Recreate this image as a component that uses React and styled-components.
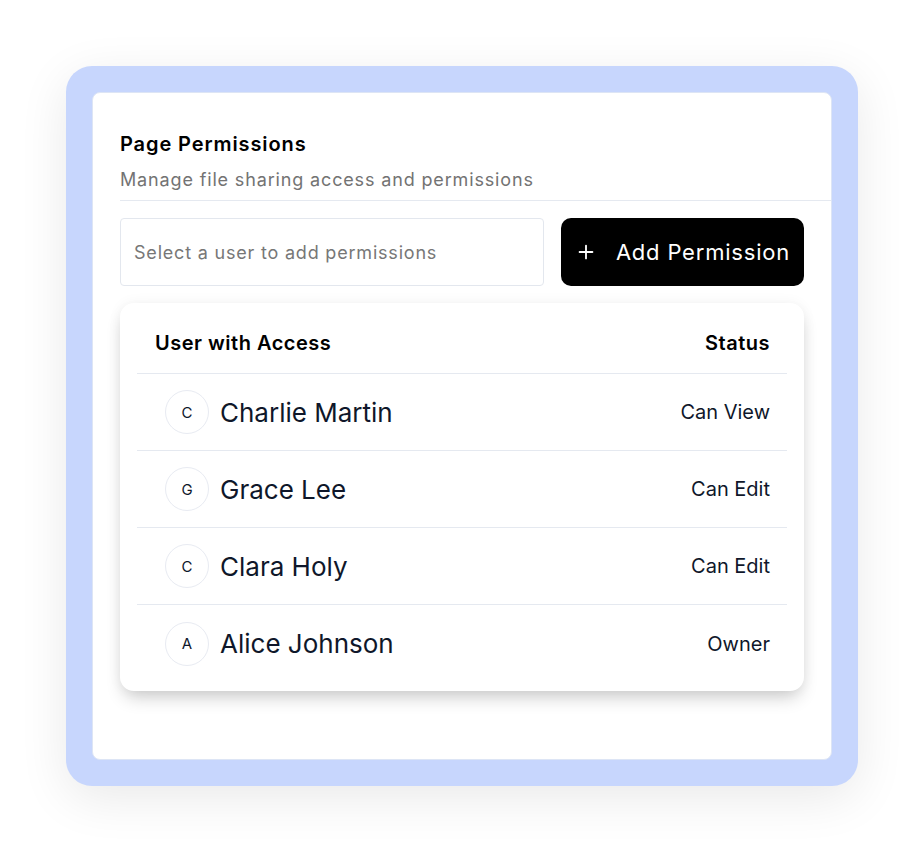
import React from "react"
import styled, { createGlobalStyle } from "styled-components"
import { Plus } from "lucide-react"

const GlobalStyle = createGlobalStyle`
    body {
        margin: 0;
        background: #ffffff;
        font-family: Inter, "Liberation Sans", sans-serif;
    }
`

const Page = styled.div`
    padding: 66px;
    width: 924px;
    height: 852px;
    box-sizing: border-box;
`
const Frame = styled.div`
    width: 792px;
    height: 720px;
    box-sizing: border-box;
    padding: 26px;
    background: #c7d6fd;
    border-radius: 26px;
    box-shadow: 0 12px 50px rgba(0, 0, 0, 0.09);
`
const Card = styled.div`
    height: 100%;
    box-sizing: border-box;
    background: #fff;
    border-radius: 8px;
    border: 1px solid #dde5f5;
    padding: 39px 27px 0 27px;
`
const Header = styled.div`
    margin-right: -27px;
    padding-bottom: 8px;
    border-bottom: 1px solid #e5e9f0;
`
const Title = styled.h2`
    margin: 0;
    font-size: 20px;
    line-height: 24px;
    font-weight: 600;
    color: #000;
    letter-spacing: 0.9px;
`
const Subtitle = styled.p`
    margin: 12px 0 0;
    font-size: 18px;
    line-height: 24px;
    color: #737373;
    letter-spacing: 0.85px;
`
const Controls = styled.div`
    display: grid;
    grid-template-columns: 424px 243px;
    gap: 17px;
    margin-top: 17px;
`
const Input = styled.input`
    height: 68px;
    box-sizing: border-box;
    border: 1px solid #e3e7ee;
    border-radius: 4px;
    padding: 0 13px;
    font-family: inherit;
    font-size: 18px;
    letter-spacing: 0.8px;
    color: #111;
    outline: none;
    &::placeholder {
        color: #777;
    }
`
const Button = styled.button`
    height: 68px;
    display: flex;
    align-items: center;
    justify-content: center;
    gap: 19px;
    background: #000;
    color: #fff;
    border: none;
    border-radius: 10px;
    font-family: inherit;
    font-size: 22px;
    letter-spacing: 0.8px;
    cursor: pointer;
`
const Table = styled.div`
    margin-top: 17px;
    width: 684px;
    background: #fff;
    border-radius: 14px;
    padding: 0 17px 9px;
    box-sizing: border-box;
    box-shadow: 0 10px 18px -4px rgba(0, 0, 0, 0.2), 0 0 14px rgba(0, 0, 0, 0.05);
`
const Row = styled.div`
    display: flex;
    align-items: center;
    justify-content: space-between;
    height: ${props => props.head ? "71px" : "77px"};
    padding: ${props => props.head ? "10px 17px 0 18px" : "0 17px 0 28px"};
    border-bottom: ${props => props.last ? "none" : "1px solid #e5e9f0"};
    box-sizing: border-box;
`
const HeadCell = styled.span`
    font-size: 20px;
    font-weight: 600;
    color: #000;
    letter-spacing: 0.5px;
`
const User = styled.div`
    display: flex;
    align-items: center;
    gap: 11px;
`
const Avatar = styled.div`
    width: 44px;
    height: 44px;
    border-radius: 50%;
    border: 1px solid #e8ebf2;
    box-sizing: border-box;
    display: flex;
    align-items: center;
    justify-content: center;
    font-size: 15px;
    color: #0f172a;
`
const Name = styled.span`
    font-size: 26px;
    color: #0f172a;
`
const Status = styled.span`
    font-size: 20px;
    color: #0f172a;
`

const users = [
    { name: "Charlie Martin", status: "Can View" },
    { name: "Grace Lee", status: "Can Edit" },
    { name: "Clara Holy", status: "Can Edit" },
    { name: "Alice Johnson", status: "Owner" },
]

export default function App() {
    return (
        <Page>
            <GlobalStyle />
            <Frame>
                <Card>
                    <Header>
                        <Title>Page Permissions</Title>
                        <Subtitle>Manage file sharing access and permissions</Subtitle>
                    </Header>
                    <Controls>
                        <Input placeholder="Select a user to add permissions" />
                        <Button>
                            <Plus size={22} strokeWidth={2} />
                            Add Permission
                        </Button>
                    </Controls>
                    <Table>
                        <Row head>
                            <HeadCell>User with Access</HeadCell>
                            <HeadCell>Status</HeadCell>
                        </Row>
                        {users.map((u, i) => (
                            <Row key={u.name} last={i === users.length - 1}>
                                <User>
                                    <Avatar>{u.name[0]}</Avatar>
                                    <Name>{u.name}</Name>
                                </User>
                                <Status>{u.status}</Status>
                            </Row>
                        ))}
                    </Table>
                </Card>
            </Frame>
        </Page>
    )
}
